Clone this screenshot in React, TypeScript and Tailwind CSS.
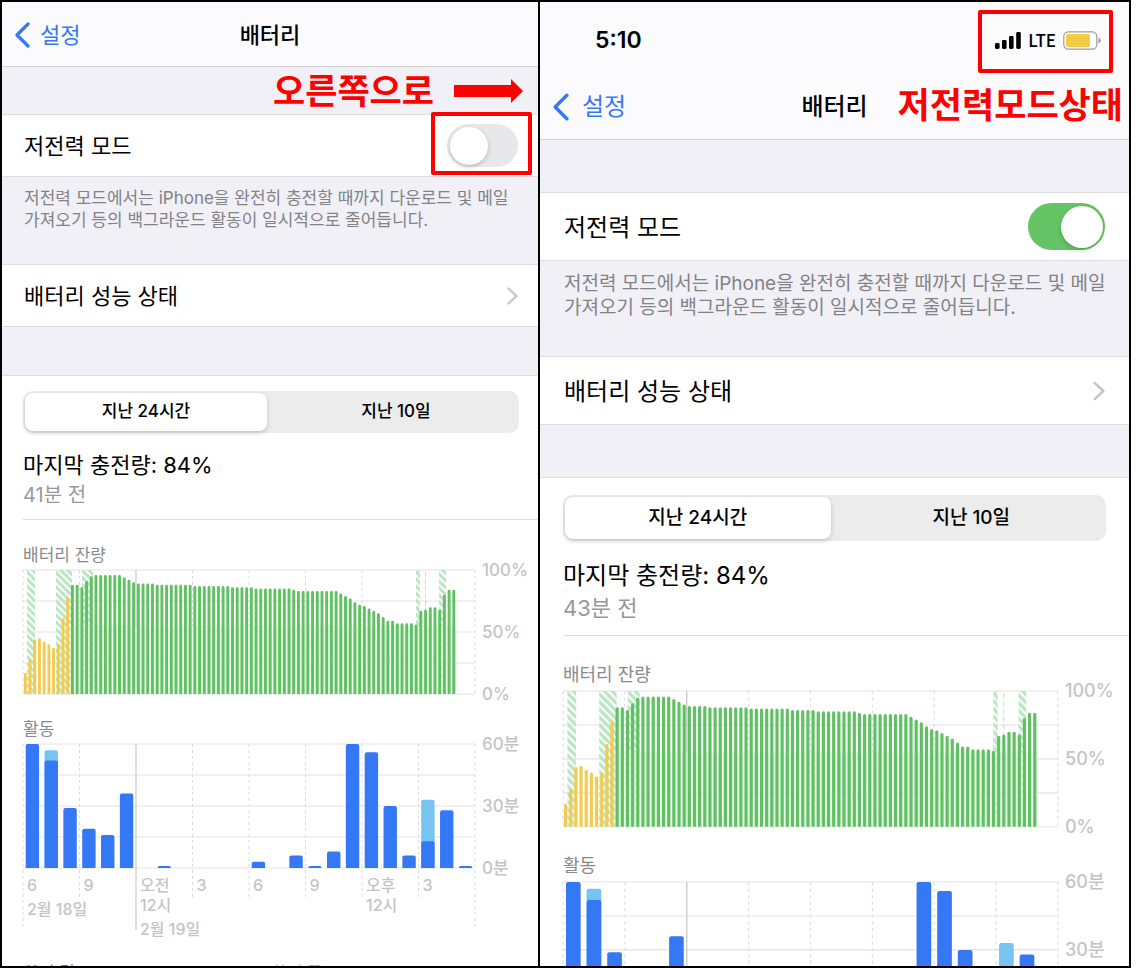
import { useId, useState } from "react";
import clsx from "clsx";

const BATTERY_LEVELS = [
  17, 28, 44, 45, 42, 40, 37, 40, 61, 78, 88, 88, 86, 91, 95, 96, 96, 96, 96,
  96, 96, 94, 92, 90, 89, 89, 89, 89, 88, 88, 88, 88, 88, 88, 88, 88, 87, 87,
  87, 87, 87, 87, 87, 87, 86, 86, 86, 86, 86, 85, 85, 85, 85, 85, 85, 85, 85,
  84, 83, 83, 83, 83, 83, 83, 83, 83, 83, 81, 79, 77, 74, 72, 71, 69, 67, 65,
  62, 59, 59, 57, 57, 57, 57, 56, 67, 68, 70, 70, 68, 80, 84, 84,
];

// the first bars were recorded in low power mode
const LOW_POWER_COUNT = 10;

// [start, width] of the periods on the charger
const CHARGING = [
  [4, 8],
  [33, 16],
  [59, 11],
  [393, 4],
  [402, 1],
  [416, 7],
];

// minutes per hour: [screen on, total]
const ACTIVITY = [
  [60, 60],
  [52, 57],
  [29, 29],
  [19, 19],
  [16, 16],
  [36, 36],
  [0, 0],
  [1, 1],
  [0, 0],
  [0, 0],
  [0, 0],
  [0, 0],
  [3, 3],
  [0, 0],
  [6, 6],
  [1, 1],
  [8, 8],
  [60, 60],
  [56, 56],
  [30, 30],
  [6, 6],
  [13, 33],
  [28, 28],
  [1, 1],
];

const HOURS = [
  { lines: ["6"], date: "2월 18일" },
  { lines: ["9"] },
  { lines: ["오전", "12시"], date: "2월 19일" },
  { lines: ["3"] },
  { lines: ["6"] },
  { lines: ["9"] },
  { lines: ["오후", "12시"] },
  { lines: ["3"] },
];

const W = 452;
const H = 124;

const SIZES = {
  small: {
    nav: "h-[65px] pt-0.5 pl-3",
    back: "h-[26px] w-4",
    backGap: "gap-[10px]",
    text: "text-[22px]",
    spacer: "h-[47px]",
    spacerBottom: "h-[48px]",
    row: "h-[63px] pl-[22px] pr-5",
    toggle:
      "h-[43px] w-[71px] before:size-[38px] checked:before:translate-x-[28px]",
    note: "h-[87px] pt-[10px] pl-[22px] text-[17px] leading-[22px]",
    chevron: "h-[18px] w-[11px]",
    usage: "pl-[21px] pt-[15px]",
    tabs: "mr-[19px] h-[42px] text-[17px]",
    summary: "pt-[17px] pb-[10px]",
    charge: "text-[22px] leading-[30px]",
    ago: "pt-px text-[20px] leading-[28px]",
    chart: "pt-[23px]",
    chartLabel: "text-[17px] leading-[24px]",
    axis: "w-[63px] pl-[7px] text-[17px]",
  },
  large: {
    nav: "h-[66px] pl-3",
    back: "h-[28px] w-[17px]",
    backGap: "gap-[13px]",
    text: "text-[24px]",
    spacer: "h-[52px]",
    spacerBottom: "h-[52px]",
    row: "h-[69px] px-6",
    toggle:
      "h-[47px] w-[77px] before:size-[42px] checked:before:translate-x-[30px]",
    note: "h-[95px] pt-[11px] pl-6 text-[19px] leading-[24px]",
    chevron: "h-[20px] w-[12px]",
    usage: "pl-[23px] pt-[17px]",
    tabs: "mr-[23px] h-[46px] text-[19px]",
    summary: "pt-[18px] pb-[12px]",
    charge: "text-[24px] leading-[34px]",
    ago: "text-[22px] leading-[30px]",
    chart: "pt-[26px]",
    chartLabel: "text-[18px] leading-[26px]",
    axis: "w-[71px] pl-[7px] text-[18px]",
  },
};

type Size = keyof typeof SIZES;

const Grid = ({ long = false }: { long?: boolean }) => (
  <g strokeWidth="1">
    {[0, 1, 2, 3, 4].map((i) => (
      <line key={i} x2={W} y1={(i * H) / 4} y2={(i * H) / 4} stroke="#e3e3e5" />
    ))}
    {[0, 1, 3, 4, 5, 6, 7, 8].map((i) => (
      <line
        key={i}
        x1={(i * W) / 8}
        x2={(i * W) / 8}
        y2={long ? (i % 8 === 0 ? 186 : 156) : H}
        stroke="#dcdcde"
        strokeDasharray="3 3"
      />
    ))}
    <line
      x1={W / 4}
      x2={W / 4}
      y2={long ? 186 : H}
      stroke="#c9c9cc"
      strokeWidth="1.2"
    />
  </g>
);

const BatteryBars = () => {
  const id = useId();
  const step = W / 96;

  return (
    <svg viewBox={`0 0 ${W} ${H}`} className="block w-full overflow-visible">
      <defs>
        <pattern
          id={id}
          width="5"
          height="5"
          patternUnits="userSpaceOnUse"
          patternTransform="rotate(-45)"
        >
          <rect width="3.1" height="5" fill="#bce6c3" />
        </pattern>
      </defs>
      <Grid />
      {CHARGING.map(([x, width]) => (
        <rect key={x} x={x} width={width} height={H} fill={`url(#${id})`} />
      ))}
      <rect
        x={LOW_POWER_COUNT * step}
        y={H * 0.45}
        width={(BATTERY_LEVELS.length - LOW_POWER_COUNT) * step}
        height={H * 0.55}
        fill="#e2f5e2"
        opacity="0.7"
      />
      {BATTERY_LEVELS.map((level, i) => {
        const top = H - (level / 100) * H;
        const x = i * step + 0.9;
        return (
          <path
            key={i}
            d={`M${x} ${H}V${top + 1.4}a1.45 1.45 0 0 1 2.9 0V${H}z`}
            fill={i < LOW_POWER_COUNT ? "#f2cb50" : "#5fc162"}
          />
        );
      })}
    </svg>
  );
};

const bar = (x: number, minutes: number) => {
  const h = (minutes / 60) * H;
  const r = Math.min(2, h);
  return `M${x} ${H}v${r - h}q0 ${-r} ${r} ${-r}h${13.4 - 2 * r}q${r} 0 ${r} ${r}V${H}z`;
};

const ActivityBars = () => (
  <svg viewBox={`0 0 ${W} ${H}`} className="block w-full overflow-visible">
    <Grid long />
    {ACTIVITY.map(([on, total], i) => {
      const x = (i * W) / 24 + 2.7;
      return (
        <g key={i}>
          {total > on && <path d={bar(x, total)} fill="#77c4f3" />}
          {on > 0 && <path d={bar(x, on)} fill="#3478f6" />}
        </g>
      );
    })}
  </svg>
);

const Chart = ({
  title,
  labels,
  size,
  children,
}: {
  title: string;
  labels: string[];
  size: Size;
  children: React.ReactNode;
}) => {
  const s = SIZES[size];
  return (
    <section className={s.chart}>
      <h3 className={clsx("mb-[3px] text-[#8a8a8e]", s.chartLabel)}>{title}</h3>
      <div className="flex">
        <div className="min-w-0 flex-1">{children}</div>
        <div
          className={clsx(
            "-my-2.5 flex flex-col justify-between leading-[20px] font-medium text-[#c4c4c6]",
            s.axis,
          )}
        >
          {labels.map((label) => (
            <span key={label}>{label}</span>
          ))}
        </div>
      </div>
    </section>
  );
};

const HourLabels = () => (
  <div className="mt-[7px] mr-[63px] grid grid-cols-8 text-[16px] leading-[20px] font-medium whitespace-nowrap text-[#c4c4c6]">
    {HOURS.map(({ lines, date }, i) => (
      <div key={i} className="w-0 pl-1">
        {lines.map((line) => (
          <p key={line}>{line}</p>
        ))}
        {date && <p className="mt-1">{date}</p>}
      </div>
    ))}
  </div>
);

const StatusBar = () => (
  <div className="flex h-[72px] items-start justify-between pt-2 pr-4 pl-[55px]">
    <time className="text-[23px] leading-[60px] font-semibold">5:10</time>
    <div className="flex h-[63px] items-center gap-[7px] rounded-xs border-4 border-[#ff0000] pr-2 pb-[3px] pl-[13px]">
      <svg viewBox="0 0 26 17" className="h-[17px] w-[26px]">
        <rect y="11" width="4.6" height="6" rx="1.4" />
        <rect x="7" y="8" width="4.6" height="9" rx="1.4" />
        <rect x="14" y="4" width="4.6" height="13" rx="1.4" />
        <rect x="21.2" width="4.6" height="17" rx="1.4" />
      </svg>
      <span className="font-['Noto_Sans_CJK_KR'] text-[17px] leading-[20px] font-medium">
        LTE
      </span>
      <svg viewBox="0 0 38 19" className="h-[19px] w-[38px]">
        <rect
          x="0.8"
          y="0.8"
          width="33"
          height="17.4"
          rx="4.6"
          fill="#fff"
          stroke="#9b9b9f"
          strokeWidth="1.2"
        />
        <rect x="3" y="3" width="24" height="13" rx="2" fill="#f5cb45" />
        <path d="M35.6 6.6q2 1 2 2.9t-2 2.9z" fill="#8f8f93" />
      </svg>
    </div>
  </div>
);

type PanelProps = {
  size: Size;
  minutesAgo: number;
  lowPower?: boolean;
  statusBar?: boolean;
  navNote?: React.ReactNode;
  spacerNote?: React.ReactNode;
  highlightToggle?: boolean;
  children?: React.ReactNode;
};

const BatteryPanel = ({
  size,
  minutesAgo,
  lowPower = false,
  statusBar = false,
  navNote,
  spacerNote,
  highlightToggle = false,
  children,
}: PanelProps) => {
  const s = SIZES[size];
  const id = useId();
  const [tab, setTab] = useState(0);

  return (
    <section className="min-w-0 overflow-hidden bg-white">
      <header className="bg-[#fbfbfd]">
        {statusBar && <StatusBar />}
        <nav
          className={clsx(
            "grid grid-cols-[1fr_auto_1fr] items-center border-b border-[#d3d3d7]",
            s.nav,
            s.text,
          )}
        >
          <a
            href="#settings"
            className={clsx("flex items-center text-[#3478f6]", s.backGap)}
          >
            <svg viewBox="0 0 16 26" fill="none" className={s.back}>
              <path
                d="M14 2 3 13l11 11"
                stroke="currentColor"
                strokeWidth="3.2"
                strokeLinecap="round"
                strokeLinejoin="round"
              />
            </svg>
            설정
          </a>
          {/* the left inset of the bar is taken back so the title stays centred */}
          <h1 className="-ml-3 font-medium">배터리</h1>
          <div className="flex justify-end">{navNote}</div>
        </nav>
      </header>

      <div className="bg-[#f1f0f6]">
        <div className={clsx("flex items-center justify-end", s.spacer)}>
          {spacerNote}
        </div>
        <div
          className={clsx(
            "flex items-center justify-between border-y border-[#dddde1] bg-white",
            s.row,
          )}
        >
          <label htmlFor={id} className={clsx("pt-0.5", s.text)}>
            저전력 모드
          </label>
          <div className="relative flex">
            <input
              id={id}
              type="checkbox"
              role="switch"
              defaultChecked={lowPower}
              className={clsx(
                "flex appearance-none items-center rounded-full bg-[#e8e8ea] pl-[3px] before:rounded-full before:bg-white before:shadow-[0_2px_5px_rgba(0,0,0,0.2)] before:content-[''] checked:bg-[#65c466]",
                s.toggle,
              )}
            />
            {highlightToggle && (
              <div className="pointer-events-none absolute -top-3 -right-3.5 -bottom-2 -left-4 rounded-xs border-4 border-[#ff0000]" />
            )}
          </div>
        </div>
        <p className={clsx("text-[#828287]", s.note)}>
          저전력 모드에서는 iPhone을 완전히 충전할 때까지 다운로드 및 메일
          <br />
          가져오기 등의 백그라운드 활동이 일시적으로 줄어듭니다.
        </p>
        <a
          href="#health"
          className={clsx(
            "flex items-center justify-between border-y border-[#dddde1] bg-white",
            s.row,
            s.text,
          )}
        >
          <span className="pt-0.5">배터리 성능 상태</span>
          <svg viewBox="0 0 11 18" fill="none" className={s.chevron}>
            <path
              d="m1.5 1.5 8 7.5-8 7.5"
              stroke="#c4c4c7"
              strokeWidth="2.2"
              strokeLinecap="round"
              strokeLinejoin="round"
            />
          </svg>
        </a>
        <div className={s.spacerBottom} />
      </div>

      <div className={clsx("border-t border-[#dddde1]", s.usage)}>
        <div
          role="tablist"
          className={clsx(
            "grid grid-cols-2 gap-2 rounded-[10px] bg-[#ececed] p-0.5 font-medium",
            s.tabs,
          )}
        >
          {["지난 24시간", "지난 10일"].map((name, i) => (
            <button
              key={name}
              type="button"
              role="tab"
              aria-selected={tab === i}
              onClick={() => setTab(i)}
              className={clsx(
                "rounded-lg",
                tab === i && "bg-white shadow-[0_2px_5px_rgba(0,0,0,0.18)]",
              )}
            >
              {name}
            </button>
          ))}
        </div>
        <div className={clsx("border-b border-[#dddde1]", s.summary)}>
          <h2 className={s.charge}>마지막 충전량: 84%</h2>
          <p className={clsx("text-[#98989c]", s.ago)}>{minutesAgo}분 전</p>
        </div>
        <Chart title="배터리 잔량" labels={["100%", "50%", "0%"]} size={size}>
          <BatteryBars />
        </Chart>
        <Chart title="활동" labels={["60분", "30분", "0분"]} size={size}>
          <ActivityBars />
        </Chart>
        {children}
      </div>
    </section>
  );
};

const App = () => {
  return (
    <main className="mr-[13px] grid h-screen grid-cols-[536fr_589fr] gap-0.5 overflow-hidden border-2 border-black bg-black font-['Inter','Noto_Sans_CJK_KR',sans-serif] text-black">
      <BatteryPanel
        size="small"
        minutesAgo={41}
        highlightToggle
        spacerNote={
          <div className="flex items-center gap-5 pr-[15px]">
            <strong className="text-[35px] leading-[40px] font-bold text-[#ff0000]">
              오른쪽으로
            </strong>
            <svg viewBox="0 0 69 24" className="h-6 w-[69px]">
              <path d="M0 6h57V0l12 12-12 12v-6H0z" fill="#ff0000" />
            </svg>
          </div>
        }
      >
        <HourLabels />
        <div className="mt-[22px] mr-[19px] grid grid-cols-2 text-[17px] leading-[24px]">
          <span className="text-[#3478f6]">화면 켬</span>
          <span className="text-[#77c4f3]">화면 끔</span>
        </div>
      </BatteryPanel>
      <BatteryPanel
        size="large"
        minutesAgo={43}
        lowPower
        statusBar
        navNote={
          <strong className="pr-1.5 pb-1 text-[35px] leading-[40px] font-bold text-[#ff0000]">
            저전력모드상태
          </strong>
        }
      />
    </main>
  );
};

export default App;
